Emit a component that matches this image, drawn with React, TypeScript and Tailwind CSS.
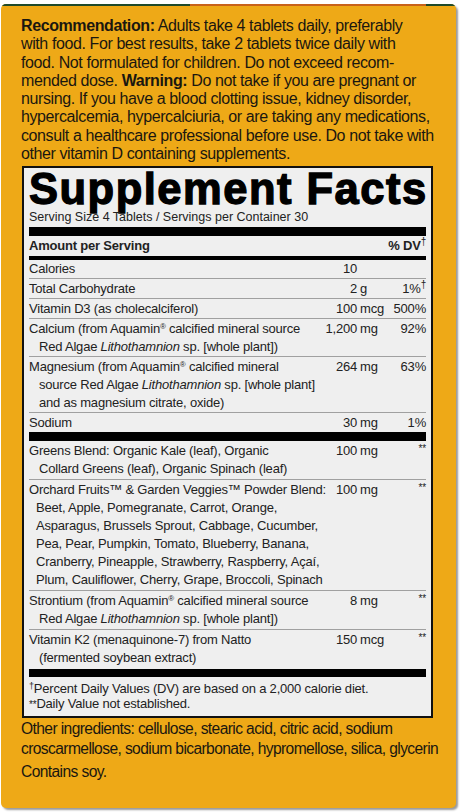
import React from 'react';

interface Row {
  lines: React.ReactNode[];
  amount: string;
  unit: string;
  dv: React.ReactNode;
  indent?: string;
}

const Aq = () => (
  <>
    Aquamin<sup className="text-[8px]">®</sup>
  </>
);

const Litho = () => <i>Lithothamnion</i>;

const TOP_ROWS: Row[] = [
  { lines: ['Calories'], amount: '10', unit: '', dv: '' },
  { lines: ['Total Carbohydrate'], amount: '2', unit: 'g', dv: <>1%<sup className="text-[10px]">†</sup></> },
  { lines: ['Vitamin D3 (as cholecalciferol)'], amount: '100', unit: 'mcg', dv: '500%' },
  {
    lines: [
      <>Calcium (from <Aq /> calcified mineral source</>,
      <>Red Algae <Litho /> sp. [whole plant])</>,
    ],
    amount: '1,200',
    unit: 'mg',
    dv: '92%',
  },
  {
    lines: [
      <>Magnesium (from <Aq /> calcified mineral</>,
      <>source Red Algae <Litho /> sp. [whole plant]</>,
      'and as magnesium citrate, oxide)',
    ],
    amount: '264',
    unit: 'mg',
    dv: '63%',
  },
  { lines: ['Sodium'], amount: '30', unit: 'mg', dv: '1%' },
];

const BOTTOM_ROWS: Row[] = [
  {
    lines: ['Greens Blend: Organic Kale (leaf), Organic', 'Collard Greens (leaf), Organic Spinach (leaf)'],
    amount: '100',
    unit: 'mg',
    dv: '**',
  },
  {
    lines: [
      'Orchard Fruits™ & Garden Veggies™ Powder Blend:',
      'Beet, Apple, Pomegranate, Carrot, Orange,',
      'Asparagus, Brussels Sprout, Cabbage, Cucumber,',
      'Pea, Pear, Pumpkin, Tomato, Blueberry, Banana,',
      'Cranberry, Pineapple, Strawberry, Raspberry, Açaí,',
      'Plum, Cauliflower, Cherry, Grape, Broccoli, Spinach',
    ],
    amount: '100',
    unit: 'mg',
    dv: '**',
    indent: 'pl-[7px]',
  },
  {
    lines: [
      <>Strontium (from <Aq /> calcified mineral source</>,
      <>Red Algae <Litho /> sp. [whole plant])</>,
    ],
    amount: '8',
    unit: 'mg',
    dv: '**',
  },
  {
    lines: ['Vitamin K2 (menaquinone-7) from Natto', '(fermented soybean extract)'],
    amount: '150',
    unit: 'mcg',
    dv: '**',
  },
];

const RECOMMENDATION: React.ReactNode[] = [
  <><b>Recommendation:</b> Adults take 4 tablets daily, preferably</>,
  'with food. For best results, take 2 tablets twice daily with',
  'food. Not formulated for children. Do not exceed recom-',
  <>mended dose. <b>Warning:</b> Do not take if you are pregnant or</>,
  'nursing. If you have a blood clotting issue, kidney disorder,',
  'hypercalcemia, hypercalciuria, or are taking any medications,',
  'consult a healthcare professional before use. Do not take with',
  'other vitamin D containing supplements.',
];

function FactRow({ row, pad, border }: { row: Row; pad: string; border: boolean }) {
  const star = row.dv === '**';
  return (
    <div className={`flex ${pad} ${border ? 'border-t border-[#a0a0a0]' : ''}`}>
      <div className="min-w-0 flex-1 whitespace-nowrap">
        {row.lines.map((l, i) => (
          <div key={i} className={i === 0 ? '' : row.indent ?? 'pl-[10px]'}>
            {l}
          </div>
        ))}
      </div>
      <div className="w-[48px] text-right">{row.amount}</div>
      <div className="w-[32px] pl-[3px]">{row.unit}</div>
      <div className={`w-[37px] text-right ${star ? 'text-[10px] leading-[14px]' : ''}`}>{row.dv}</div>
    </div>
  );
}

export default function App() {
  return (
    <div
      className="min-h-[812px] bg-white pt-[4px] text-[#1a1710]"
      style={{ fontFamily: "'Liberation Sans', Arial, sans-serif" }}
    >
      <div className="ml-[1px] w-[455px] rounded-[5px] bg-[#eea917] shadow-[2px_2px_2px_rgba(0,0,0,0.4)] overflow-hidden">
        <div className="flex h-[2px]">
          <div className="w-[189px] bg-[#1f4a2a]" />
          <div className="flex-1 bg-[#c8621a]" />
          <div className="w-[30px] bg-[#1f4a2a]" />
        </div>

        <div className="px-[20px] pt-[11px] pb-[26px]">
          <div className="text-[16px] leading-[18.3px] tracking-[-0.4px] whitespace-nowrap">
            {RECOMMENDATION.map((l, i) => (
              <div key={i}>{l}</div>
            ))}
          </div>

          <div className="mt-[3px] ml-[1px] w-[411px] border-2 border-[#111] bg-[#efefef] px-[5px] pt-[2px] pb-[4px] text-[13px] leading-[18px] tracking-[-0.2px] text-[#222]">
            <h1 className="whitespace-nowrap text-[43.5px] leading-[38px] font-bold tracking-[1.5px] text-black [-webkit-text-stroke:1.3px_black]">
              Supplement Facts
            </h1>
            <div className="mt-[2px] text-[12.5px] leading-[15px] tracking-normal">
              Serving Size 4 Tablets / Servings per Container 30
            </div>
            <div className="mt-[2px] h-[9px] bg-black" />
            <div className="flex justify-between py-[1px] font-bold">
              <span>Amount per Serving</span>
              <span>
                % DV<sup className="text-[10px] font-normal">†</sup>
              </span>
            </div>
            <div className="h-[4px] bg-black" />
            {TOP_ROWS.map((r, i) => (
              <FactRow key={i} row={r} pad={i === 0 ? 'py-0' : 'py-[0.5px]'} border={i !== 0} />
            ))}
            <div className="h-[9px] bg-black" />
            {BOTTOM_ROWS.map((r, i) => (
              <FactRow key={i} row={r} pad="py-[1px]" border={i !== 0} />
            ))}
            <div className="mt-[1px] h-[8px] bg-black" />
            <div className="pt-[4px] leading-[15px] whitespace-nowrap">
              <div>
                <sup className="text-[9px]">†</sup>Percent Daily Values (DV) are based on a 2,000 calorie diet.
              </div>
              <div>
                <span className="text-[10px]">**</span>Daily Value not established.
              </div>
            </div>
          </div>

          <div className="mt-[1px] text-[15.6px] leading-[20px] tracking-[-0.6px] whitespace-nowrap">
            <div>Other ingredients: cellulose, stearic acid, citric acid, sodium</div>
            <div>croscarmellose, sodium bicarbonate, hypromellose, silica, glycerin</div>
            <div className="mt-[3px]">Contains soy.</div>
          </div>
        </div>
      </div>
    </div>
  );
}
